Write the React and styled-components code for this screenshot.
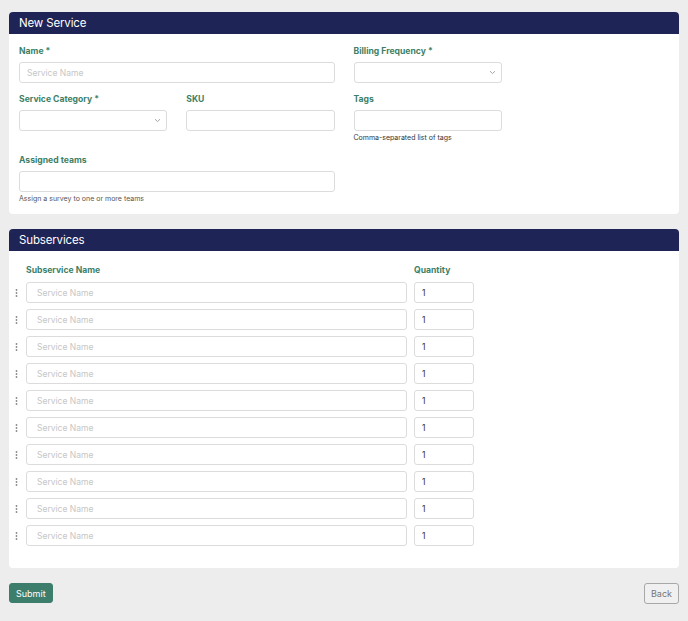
import React from 'react';
import styled, { createGlobalStyle } from 'styled-components';

const GlobalStyle = createGlobalStyle`
  body {
    margin: 0;
    background: #ededed;
    font-family: Inter, "Noto Sans", sans-serif;
  }
`;

const Page = styled.div`
  padding: 12px 9px 0;
  width: 670px;
`;

const Card = styled.section`
  background: #fff;
  border-radius: 4px;
  overflow: hidden;
  margin-bottom: 15px;
`;

const CardHeader = styled.h2`
  margin: 0;
  height: 22px;
  background: #1e2456;
  color: #fff;
  font-size: 11.5px;
  letter-spacing: -0.15px;
  font-weight: 400;
  line-height: 22px;
  padding: 0 10px;
`;

const FormGrid = styled.div`
  display: grid;
  grid-template-columns: repeat(4, 1fr);
  column-gap: 19px;
  row-gap: 9px;
  padding: 10px 10px 9px;
`;

const Field = styled.div`
  display: flex;
  flex-direction: column;
  grid-column: ${(p) => p.$start || 'auto'} / span ${(p) => p.$span || 1};
`;

const Label = styled.label`
  color: #3d7f67;
  font-size: 8.6px;
  font-weight: 700;
  line-height: 14px;
  margin-bottom: ${(p) => p.$gap ?? 4}px;
`;

const Input = styled.input`
  box-sizing: border-box;
  width: 100%;
  height: 21px;
  border: 1px solid #dcdcdc;
  border-radius: 3px;
  padding: 0 ${(p) => p.$pad || 7}px;
  font-family: Inter, "Noto Sans", sans-serif;
  font-size: 8.5px;
  color: #333;
  background: #fff;
  outline: none;
  &::placeholder {
    color: #c6c6c6;
  }
`;

const Select = styled.div`
  box-sizing: border-box;
  height: 21px;
  border: 1px solid #dcdcdc;
  border-radius: 3px;
  display: flex;
  align-items: center;
  justify-content: flex-end;
  padding-right: 5px;
`;

const Help = styled.div`
  font-size: 7px;
  line-height: 12px;
  color: ${(p) => p.$color || '#333'};
  margin-top: 1px;
`;

const SubBody = styled.div`
  padding: 12px 10px 22px 0;
  display: flex;
  flex-direction: column;
  gap: 6px;
`;

const SubRow = styled.div`
  display: grid;
  grid-template-columns: 17px 381px 67px;
  align-items: center;
  & > :last-child {
    margin-left: 7px;
    width: 60px;
  }
`;

const HeadRow = styled(SubRow)`
  margin-bottom: -1px;
`;

const Handle = styled.div`
  display: flex;
  padding-left: 6px;
  align-self: start;
  padding-top: 7px;
`;

const Footer = styled.div`
  display: flex;
  justify-content: space-between;
  align-items: flex-start;
`;

const Button = styled.button`
  font-family: Inter, "Noto Sans", sans-serif;
  font-size: 9px;
  border-radius: 3px;
  cursor: pointer;
  padding: 0 6px;
`;

const SubmitButton = styled(Button)`
  height: 20px;
  background: #3d7d6b;
  border: 1px solid #3d7d6b;
  color: #fff;
`;

const BackButton = styled(Button)`
  height: 21px;
  background: #f0f0f0;
  border: 1px solid #a8a8a8;
  color: #777;
`;

const Chevron = () => (
  <svg width="7" height="5" viewBox="0 0 7 5">
    <path d="M1 1.2 L3.5 3.6 L6 1.2" fill="none" stroke="#999" strokeWidth="0.9" />
  </svg>
);

const Dots = () => (
  <svg width="3" height="8" viewBox="0 0 3 8">
    <circle cx="1.5" cy="1" r="0.9" fill="#888" />
    <circle cx="1.5" cy="4" r="0.9" fill="#888" />
    <circle cx="1.5" cy="7" r="0.9" fill="#888" />
  </svg>
);

const rows = Array.from({ length: 10 }, (_, i) => i);

export default function App() {
  return (
    <>
      <GlobalStyle />
      <Page>
        <Card>
          <CardHeader>New Service</CardHeader>
          <FormGrid>
            <Field $span={2}>
              <Label>Name *</Label>
              <Input placeholder="Service Name" />
            </Field>
            <Field>
              <Label>Billing Frequency *</Label>
              <Select>
                <Chevron />
              </Select>
            </Field>
            <Field $start={1}>
              <Label>Service Category *</Label>
              <Select>
                <Chevron />
              </Select>
            </Field>
            <Field>
              <Label>SKU</Label>
              <Input />
            </Field>
            <Field>
              <Label>Tags</Label>
              <Input />
              <Help>Comma-separated list of tags</Help>
            </Field>
            <Field $span={2} $start={1}>
              <Label>Assigned teams</Label>
              <Input />
              <Help $color="#555">Assign a survey to one or more teams</Help>
            </Field>
          </FormGrid>
        </Card>

        <Card>
          <CardHeader>Subservices</CardHeader>
          <SubBody>
            <HeadRow>
              <span />
              <Label $gap={0}>Subservice Name</Label>
              <Label $gap={0}>Quantity</Label>
            </HeadRow>
            {rows.map((i) => (
              <SubRow key={i}>
                <Handle>
                  <Dots />
                </Handle>
                <Input $pad={10} placeholder="Service Name" />
                <Input defaultValue="1" />
              </SubRow>
            ))}
          </SubBody>
        </Card>

        <Footer>
          <SubmitButton>Submit</SubmitButton>
          <BackButton>Back</BackButton>
        </Footer>
      </Page>
    </>
  );
}
